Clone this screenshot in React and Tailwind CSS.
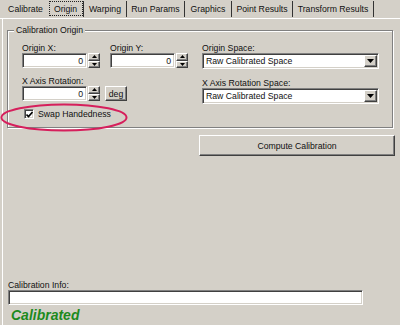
import React from 'react';

const sunken =
  'bg-white border border-t-[#808080] border-l-[#808080] border-b-white border-r-white shadow-[inset_1px_1px_0_#404040,inset_-1px_-1px_0_#d4d0c8]';
const raised =
  'bg-[#d4d0c8] border border-t-white border-l-white border-b-[#404040] border-r-[#404040] shadow-[inset_-1px_-1px_0_#808080]';

const tabs = [
  { label: 'Calibrate', w: 'w-[45px]', sep: false },
  { label: 'Origin', w: 'w-[36px]', sep: true, active: true },
  { label: 'Warping', w: 'w-[43px]', sep: true },
  { label: 'Run Params', w: 'w-[58px]', sep: true },
  { label: 'Graphics', w: 'w-[47px]', sep: true },
  { label: 'Point Results', w: 'w-[61px]', sep: true },
  { label: 'Transform Results', w: 'w-[81px]', sep: true },
];

const Arrow = ({ up }) => (
  <svg width="5" height="3" viewBox="0 0 5 3">
    <polygon points={up ? '2.5,0 5,3 0,3' : '0,0 5,0 2.5,3'} fill="#000" />
  </svg>
);

const NumberField = ({ value }) => (
  <div className="flex h-[15px]">
    <div className={`${sunken} w-[65px] h-full flex items-center justify-end pr-[3px]`}>{value}</div>
    <div className="flex flex-col w-[12px] h-full ml-px">
      <div className={`${raised} flex-1 flex items-center justify-center`}><Arrow up /></div>
      <div className={`${raised} flex-1 flex items-center justify-center`}><Arrow /></div>
    </div>
  </div>
);

const Select = ({ value }) => (
  <div className={`${sunken} w-[177px] h-[16px] flex items-center justify-between pl-[3px] pr-px`}>
    <span>{value}</span>
    <div className={`${raised} w-[13px] h-[12px] flex items-center justify-center`}>
      <svg width="7" height="4" viewBox="0 0 7 4"><polygon points="0,0 7,0 3.5,4" fill="#000" /></svg>
    </div>
  </div>
);

export default function App() {
  return (
    <div className="relative w-[400px] h-[325px] overflow-hidden bg-[#d4d0c8] text-[8.7px] leading-[10px] text-[#111] font-['Liberation_Sans',Arial,sans-serif] flex flex-col">
      {/* tab strip */}
      <div className="h-[19px] flex items-start pt-px pl-[3px] border-b border-white shrink-0">
        {tabs.map((t) => (
          <div
            key={t.label}
            className={`${t.w} h-[16px] flex items-center justify-center ${t.sep ? 'border-r border-[#333]' : ''}`}
          >
            {t.active ? (
              <div className="w-[34px] h-[15px] -mt-px border border-dotted border-[#222] flex items-center justify-center">
                {t.label}
              </div>
            ) : (
              t.label
            )}
          </div>
        ))}
      </div>

      {/* panel */}
      <div className="flex-1 ml-[2px] border-l border-white flex flex-col">
        <div className="relative ml-[4px] mt-[11px] w-[386px] h-[98px] border border-[#808080] shadow-[1px_1px_0_#fff,inset_1px_1px_0_#fff]">
          <span className="absolute -top-[6px] left-[6px] px-[2px] bg-[#d4d0c8]">Calibration Origin</span>

          <div className="flex pt-[12px] pl-[14px]">
            <div className="w-[180px]">
              <div className="flex gap-[10px]">
                <div>
                  <div className="h-[10px]">Origin X:</div>
                  <NumberField value="0" />
                </div>
                <div>
                  <div className="h-[10px]">Origin Y:</div>
                  <NumberField value="0" />
                </div>
              </div>
              <div className="mt-[8px]">
                <div className="h-[10px]">X Axis Rotation:</div>
                <div className="flex items-center gap-[5px]">
                  <NumberField value="0" />
                  <div className={`${raised} w-[22px] h-[15px] flex items-center justify-center`}>deg</div>
                </div>
              </div>
              <div className="mt-[8px] flex items-center gap-[4px] pl-[2px]">
                <div className={`${sunken} w-[10px] h-[10px] flex items-center justify-center`}>
                  <svg width="7" height="7" viewBox="0 0 7 7">
                    <polyline points="0.5,3.5 2.5,5.5 6.5,1" fill="none" stroke="#000" strokeWidth="1.6" />
                  </svg>
                </div>
                <span>Swap Handedness</span>
              </div>
            </div>
            <div>
              <div className="h-[10px]">Origin Space:</div>
              <Select value="Raw Calibrated Space" />
              <div className="mt-[9px] h-[10px]">X Axis Rotation Space:</div>
              <Select value="Raw Calibrated Space" />
            </div>
          </div>
        </div>

        <div className="flex justify-end pr-[5px] mt-[7px]">
          <div className={`${raised} w-[196px] h-[21px] flex items-center justify-center`}>Compute Calibration</div>
        </div>

        <div className="mt-auto pl-[5px] pb-[2px]">
          <div className="h-[10px]">Calibration Info:</div>
          <div className={`${sunken} w-[355px] h-[15px]`} />
          <div className="mt-[3px] pl-[3px] text-[14px] leading-[15px] font-bold italic text-[#1d8a1d]">Calibrated</div>
        </div>
      </div>

      {/* hand-drawn annotation */}
      <svg className="absolute left-0 top-[103px]" width="129" height="29" viewBox="0 0 129 29">
        <ellipse cx="64" cy="14.5" rx="62.5" ry="13" fill="none" stroke="#d61f5c" strokeWidth="2" />
      </svg>
    </div>
  );
}
